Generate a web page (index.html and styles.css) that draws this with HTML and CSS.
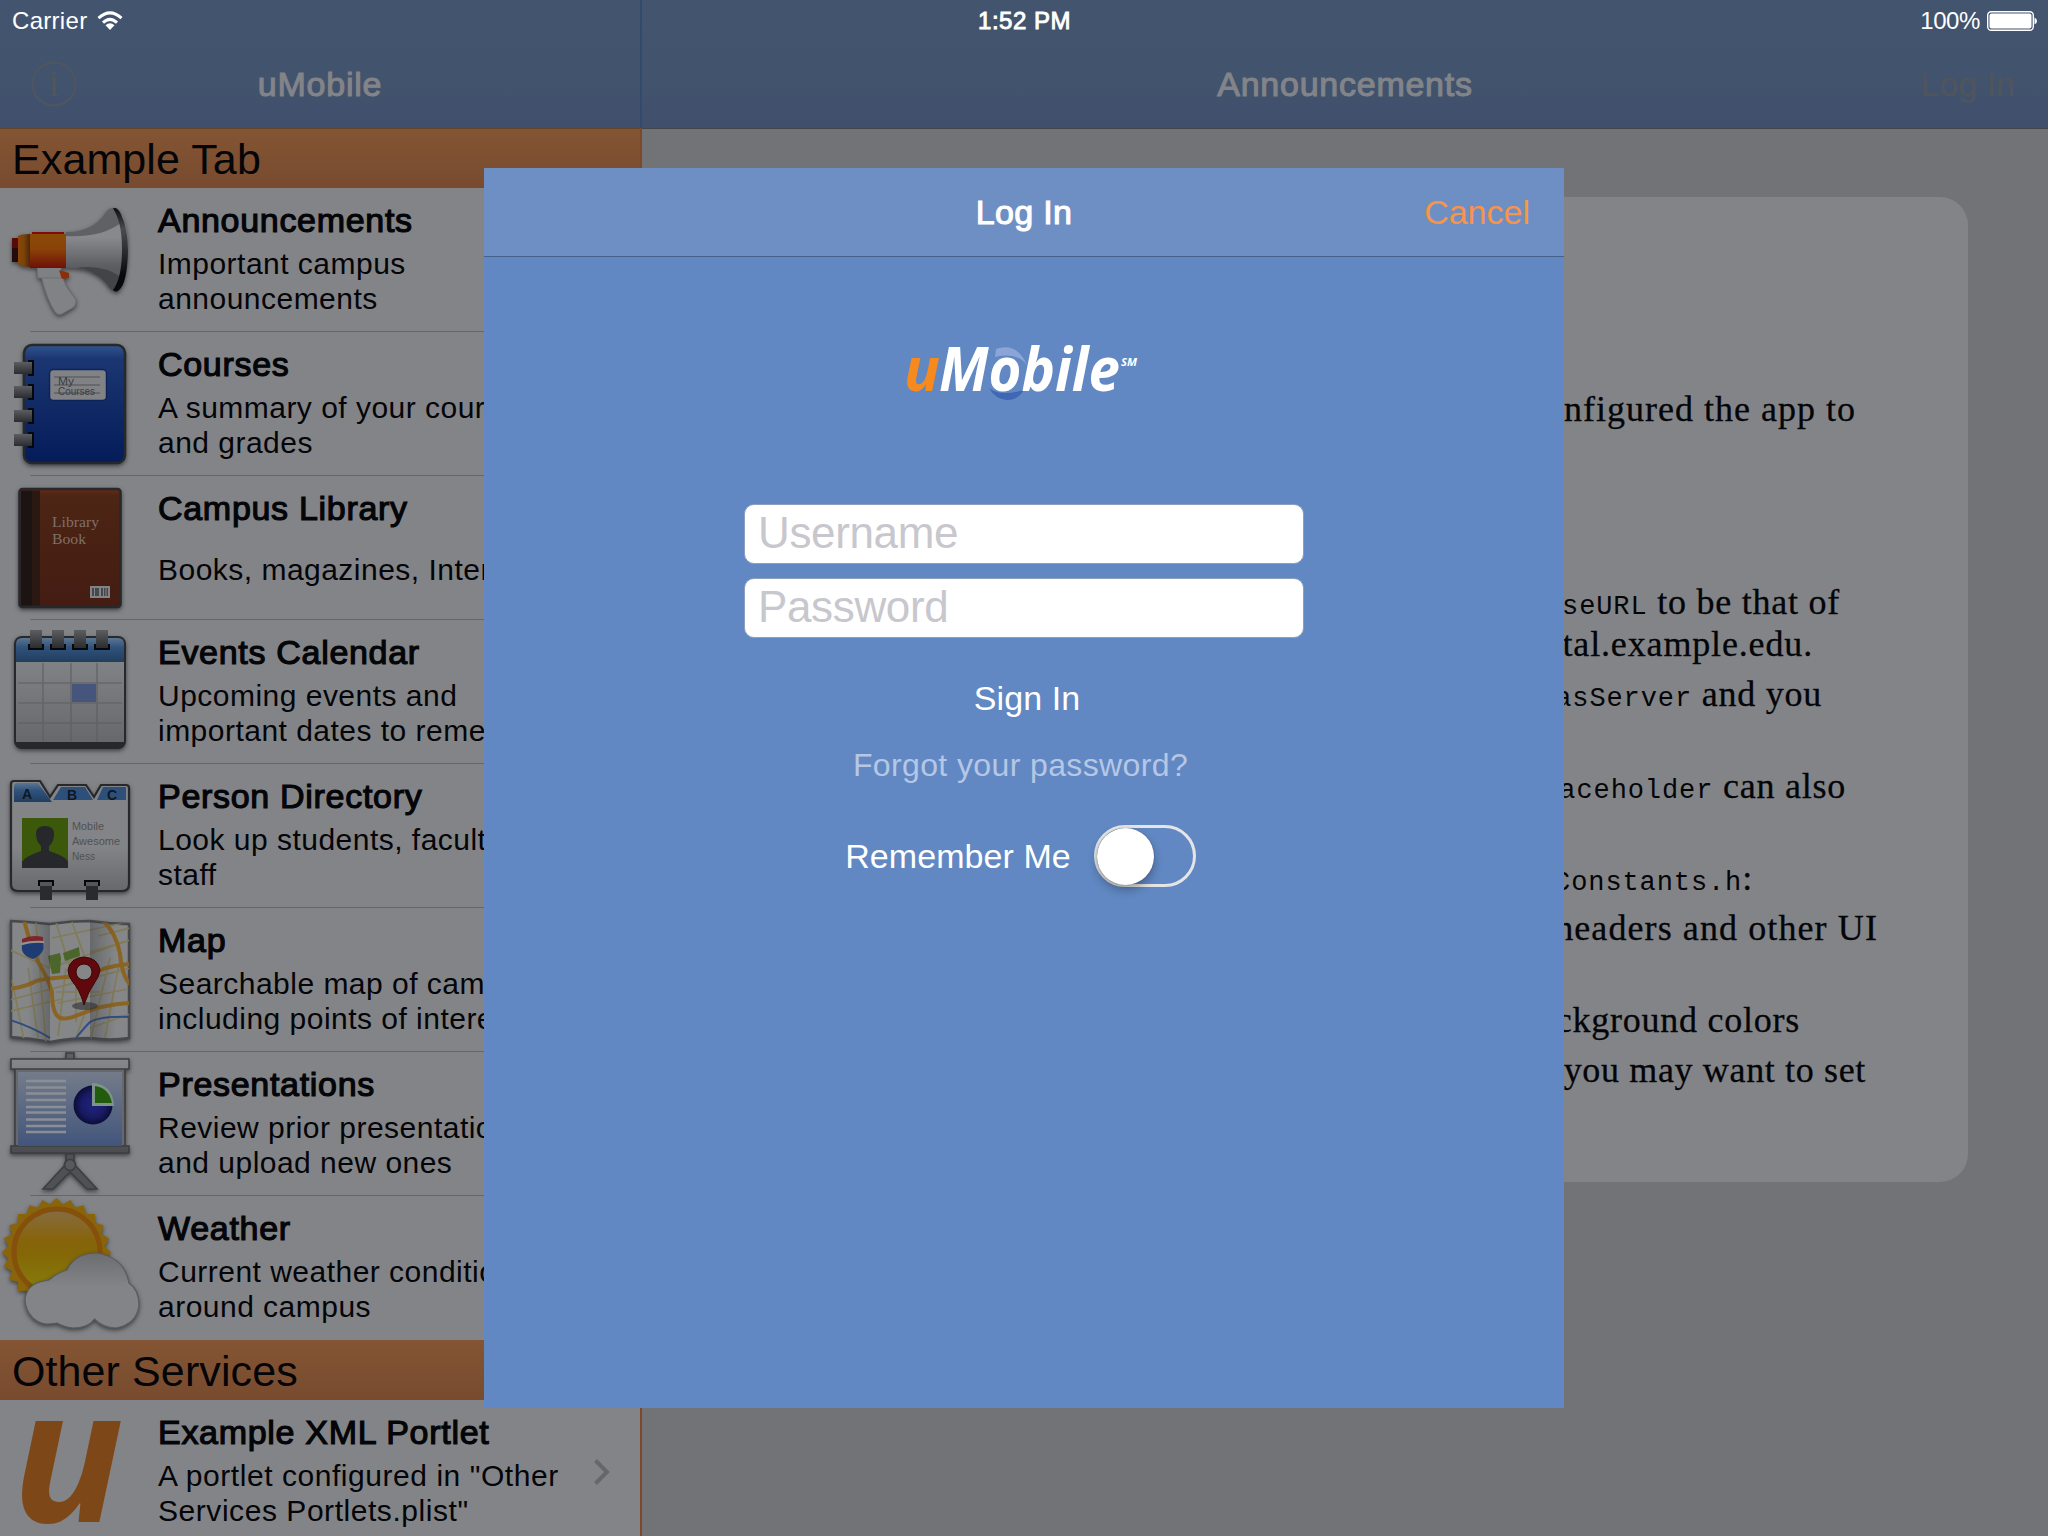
FILE: index.html
```html
<!DOCTYPE html>
<html lang="en">
<head>
<meta charset="utf-8">
<title>uMobile</title>
<link rel="stylesheet" href="styles.css">
</head>
<body>
<div class="screen">
  <aside class="sidebar">
    <header class="navbar navbar-left">
      <svg class="info" viewBox="0 0 46 46"><circle cx="23" cy="23" r="21.5"/><text x="23" y="35">i</text></svg>
      <h1 class="nav-title">uMobile</h1>
    </header>
    <div class="list">
    <h2 class="section">Example Tab</h2>
    <ul class="rows">
      <li class="row">
        <svg class="icon" viewBox="0 0 158 144">
          <defs>
            <linearGradient id="horn" x1="0" y1="0" x2="0" y2="1"><stop offset="0" stop-color="#88898c"/><stop offset=".35" stop-color="#88898c"/><stop offset=".7" stop-color="#5c5d60"/><stop offset="1" stop-color="#55565a"/></linearGradient>
            <linearGradient id="rim" x1="0" y1="0" x2="0" y2="1"><stop offset="0" stop-color="#0c0d10"/><stop offset=".25" stop-color="#4a4b4e"/><stop offset=".5" stop-color="#2d2e31"/><stop offset=".8" stop-color="#08090c"/><stop offset="1" stop-color="#08090c"/></linearGradient>
            <linearGradient id="grip" x1="0" y1="0" x2="0" y2="1"><stop offset="0" stop-color="#8b4a08"/><stop offset=".45" stop-color="#8a4207"/><stop offset="1" stop-color="#6f1008"/></linearGradient>
            <linearGradient id="cap" x1="0" y1="0" x2="1" y2="0"><stop offset="0" stop-color="#8a4709"/><stop offset=".5" stop-color="#7c4208"/><stop offset="1" stop-color="#4a270c"/></linearGradient>
          </defs>
          <g class="shadow">
            <path d="M41 88L62 88Q66 100 74 109Q78 113 74 119L62 126Q58 128 55 124Q47 112 41 88Z" fill="#818285" stroke="#6b6c6f"/>
            <path d="M66 44Q93 44 106 24Q110 19 116 20Q128 28 128 63Q127 96 117 104Q111 103 106 95Q93 79 66 80Z" fill="url(#horn)"/>
            <path d="M66 44Q93 44 106 24Q110 19 116 20Q120 24 122 34Q102 50 66 48Z" fill="#606164"/>
            <path d="M76 80Q104 76 122 90Q120 99 117 104Q111 103 106 95Q93 81 76 80Z" fill="#434447"/>
            <path d="M113 20.500Q117 18.500 121 26Q128 40 128 63Q127 96 119 102Q116 105 113 102Q122 90 122 61Q122 34 113 20.500Z" fill="url(#rim)"/>
            <path d="M37 78h24v12h-23z" fill="#7f8083" stroke="#6f7073"/>
            <path d="M59 82l10 3v5l-7 1z" fill="#8b2f0b"/>
            <path d="M12 50h6v24h-6z" fill="#570a0b"/><path d="M12 60h6v14h-6z" fill="#230b0d"/>
            <path d="M18 48q3-2 12-2v33q-9 0-12-3z" fill="url(#cap)"/>
            <path d="M30 46h36v34h-36z" fill="url(#grip)"/><path d="M32 44h32v2h-32z" fill="#7c0d0a"/>
          </g>
        </svg>
        <div class="text"><h3>Announcements</h3><p>Important campus<br>announcements</p></div>
      </li>
      <li class="row">
        <svg class="icon" viewBox="0 0 158 144">
          <defs>
            <linearGradient id="nb" x1="0" y1="0" x2="0" y2="1"><stop offset="0" stop-color="#31548f"/><stop offset=".12" stop-color="#1b3671"/><stop offset="1" stop-color="#041c59"/></linearGradient>
            <linearGradient id="coil" x1="0" y1="0" x2="0" y2="1"><stop offset="0" stop-color="#5c5d60"/><stop offset="1" stop-color="#2b2c2f"/></linearGradient>
          </defs>
          <g class="shadow"><rect x="24" y="13" width="101" height="118" rx="8" fill="url(#nb)" stroke="#26282c" stroke-width="2.5"/></g>
          <g fill="#05070b"><path d="M28 28h6v16h-6zM28 52h6v16h-6zM28 76h6v16h-6zM28 100h6v16h-6z"/></g>
          <g fill="url(#coil)"><rect x="14" y="30" width="18" height="12"/><rect x="14" y="54" width="18" height="12"/><rect x="14" y="78" width="18" height="12"/><rect x="14" y="102" width="18" height="12"/></g>
          <rect x="49.500" y="37.500" width="57" height="31" rx="4" fill="#818285" stroke="#0d2458" stroke-width="1.500"/>
          <path d="M54 45h46M54 53h46M54 61h46" stroke="#606164" stroke-width="1.500"/>
          <g class="tiny" fill="#3c3d41"><text x="58" y="53" textLength="16" lengthAdjust="spacingAndGlyphs">My</text><text x="58" y="63" textLength="37" lengthAdjust="spacingAndGlyphs">Courses</text></g>
        </svg>
        <div class="text"><h3>Courses</h3><p>A summary of your courses<br>and grades</p></div>
      </li>
      <li class="row">
        <svg class="icon" viewBox="0 0 158 144">
          <defs><linearGradient id="bk" x1="0" y1="0" x2="0" y2="1"><stop offset="0" stop-color="#632b15"/><stop offset=".06" stop-color="#4c2514"/><stop offset="1" stop-color="#441c12"/></linearGradient></defs>
          <g class="shadow"><rect x="19.500" y="13" width="101" height="118" rx="3" fill="url(#bk)" stroke="#26282c" stroke-width="2.500"/></g>
          <path d="M21 14.500h12v115h-12z" fill="#1c1413"/><path d="M32 14.500h8v115h-8z" fill="#2a1913"/>
          <g class="book" fill="#7f6f69"><text x="52" y="50.500" textLength="47" lengthAdjust="spacingAndGlyphs">Library</text><text x="52" y="67.500" textLength="34" lengthAdjust="spacingAndGlyphs">Book</text></g>
          <path d="M90 110h20v12h-20z" fill="#828386"/><path d="M92 112h2v8h-2zM95 112h4v8h-4zM101 112h2v8h-2zM104 112h1.500v8h-1.500zM106.500 112h1.500v8h-1.500z" fill="#46474a"/>
        </svg>
        <div class="text"><h3>Campus Library</h3><p>Books, magazines, Internet</p></div>
      </li>
      <li class="row">
        <svg class="icon" viewBox="0 0 158 144">
          <defs>
            <linearGradient id="cal" x1="0" y1="0" x2="0" y2="1"><stop offset="0" stop-color="#818285"/><stop offset="1" stop-color="#67686b"/></linearGradient>
            <linearGradient id="calh" x1="0" y1="0" x2="0" y2="1"><stop offset="0" stop-color="#5c7590"/><stop offset=".4" stop-color="#2f527c"/><stop offset="1" stop-color="#213e5d"/></linearGradient>
          </defs>
          <g class="shadow"><rect x="14" y="16" width="112" height="113" rx="8" fill="#26282c"/></g>
          <path d="M16 42V24q0-6 6-6h96q6 0 6 6v18z" fill="url(#calh)"/><path d="M16 42h108v80H16z" fill="url(#cal)"/>
          <path d="M43 43v79M71 43v79M97 43v79M18 63h104M18 83h104M18 103h104" stroke="#5d5e61" stroke-width="1.700" opacity=".65"/>
          <path d="M72 64h24v18h-24z" fill="#45557b"/>
          <path d="M28 24h16v6h-16zM50 24h16v6h-16zM72 24h16v6h-16zM94 24h16v6h-16z" fill="#05070b"/>
          <g fill="url(#coil)"><rect x="30" y="10" width="12" height="18"/><rect x="52" y="10" width="12" height="18"/><rect x="74" y="10" width="12" height="18"/><rect x="96" y="10" width="12" height="18"/></g>
        </svg>
        <div class="text"><h3>Events Calendar</h3><p>Upcoming events and<br>important dates to remember</p></div>
      </li>
      <li class="row">
        <svg class="icon" viewBox="0 0 158 144">
          <defs><linearGradient id="dir" x1="0" y1="0" x2="0" y2="1"><stop offset="0" stop-color="#838487"/><stop offset=".6" stop-color="#838487"/><stop offset="1" stop-color="#67686b"/></linearGradient></defs>
          <g class="shadow"><path d="M11 20q0-3 3-3h26l10 16 8-12h28l8 12 7-12h25q3 0 3 3v96q0 7-7 7H18q-7 0-7-7z" fill="url(#dir)" stroke="#26282c" stroke-width="2.200"/></g>
          <path d="M14 38V23q0-4 4-4h20l14 19z" fill="url(#calh)"/><path d="M53 36l8-13h24l8 13zM97 36l6-13h23v13z" fill="#2d507a"/>
          <g class="tabs" fill="#0f1722"><text x="27" y="34.500">A</text><text x="72" y="36">B</text><text x="112" y="36">C</text></g>
          <path d="M22 54h46v50H22z" fill="#3c580b"/><path d="M22 104v-6q2-5 19-11v-5q-5-5-5-12 0-8 9-8t9 8q0 8-5 12v5q18 6 19 11v6z" fill="#26282b"/>
          <g class="tiny" fill="#505154"><text x="72" y="66" textLength="32" lengthAdjust="spacingAndGlyphs">Mobile</text><text x="72" y="81" textLength="48" lengthAdjust="spacingAndGlyphs">Awesome</text><text x="72" y="95.500" textLength="23" lengthAdjust="spacingAndGlyphs">Ness</text></g>
          <path d="M38 122v-6h16v6zM84 122v-6h16v6z" fill="#05070b"/><path d="M40 118h12v18H40zM86 118h12v18H86z" fill="#2a2b2e"/><path d="M40 118h12v4H40zM86 118h12v4H86z" fill="#55565a"/>
        </svg>
        <div class="text"><h3>Person Directory</h3><p>Look up students, faculty and<br>staff</p></div>
      </li>
      <li class="row">
        <svg class="icon" viewBox="0 0 158 144">
          <defs>
            <clipPath id="mapclip"><path d="M11 13Q30 14 50 16Q70 13 90 13Q110 16 129 16V130Q110 133 90 130Q70 130 50 134Q30 130 11 129Z"/></clipPath>
            <linearGradient id="fold" x1="0" y1="0" x2="1" y2="0"><stop offset="0" stop-color="#26282c" stop-opacity="0"/><stop offset="1" stop-color="#26282c" stop-opacity=".32"/></linearGradient>
            <linearGradient id="fold2" x1="0" y1="0" x2="1" y2="0"><stop offset="0" stop-color="#26282c" stop-opacity=".32"/><stop offset="1" stop-color="#26282c" stop-opacity="0"/></linearGradient>
          </defs>
          <g class="shadow"><path d="M11 13Q30 14 50 16Q70 13 90 13Q110 16 129 16V130Q110 133 90 130Q70 130 50 134Q30 130 11 129Z" fill="#858688" stroke="#47484b" stroke-width="2.500"/></g>
          <g clip-path="url(#mapclip)" fill="none">
            <path d="M10 42l40 18 80-28M10 92l120-32M10 103l52-12M36 14l10 122M52 30l76-16M56 14l14 46M72 14l16 44M98 28l32-8M90 44l40-12M56 84h44M58 95l70-14M66 60l-8 68M76 64v50M88 96l-12 34M110 50l-20 84M119 56l-14 74M12 72l12 60M28 60l10 70M90 120l40-14" stroke="#827b58" stroke-width="1.700"/>
            <path d="M10 81Q28 78 36 73Q44 70 86 68L106 60Q118 57 130 56M24 12Q30 36 38 54Q48 70 52 84Q52 106 60 110Q66 112 78 107Q104 96 130 95M102 12Q116 24 120 46Q122 68 130 76" stroke="#8a6422" stroke-width="4"/>
            <path d="M10 112Q32 119 50 130M76 130Q84 120 90 114Q100 108 130 109" stroke="#304c85" stroke-width="2"/>
            <path d="M48 48l12-3 1 5-1 15-8 1zM63 45l16-6 1 9-15 5z" fill="#4b652b"/>
            <path d="M28 10h22v126h-22z" fill="url(#fold)"/><path d="M90 10h26v126h-26z" fill="url(#fold2)"/>
          </g>
          <path d="M22 31q10-5 21-2v5l-21 2z" fill="#7c2629"/><path d="M22 37q11-3 21-2 3 10-10 16-13-4-11-14z" fill="#1f3b73"/><path d="M21 36q11-3 23-2" stroke="#929396" stroke-width="2" fill="none"/>
          <ellipse cx="85" cy="98" rx="13" ry="4" fill="#303134" opacity=".6"/>
          <path d="M84 97Q80 82 72 73Q68 67 68 62Q70 50 84 49Q98 50 100 62Q99 69 95 74Q88 84 84 97Z" fill="#60080c" stroke="#350b0e"/><circle cx="84" cy="64" r="8" fill="#858688" stroke="#3b0609"/>
        </svg>
        <div class="text"><h3>Map</h3><p>Searchable map of campus,<br>including points of interest</p></div>
      </li>
      <li class="row">
        <svg class="icon" viewBox="0 0 158 144">
          <defs>
            <linearGradient id="scr" x1="0" y1="0" x2="0" y2="1"><stop offset="0" stop-color="#747c8b"/><stop offset="1" stop-color="#42557b"/></linearGradient>
            <linearGradient id="bar" x1="0" y1="0" x2="0" y2="1"><stop offset="0" stop-color="#87888b"/><stop offset="1" stop-color="#4b4c4f"/></linearGradient>
            <radialGradient id="pie"><stop offset="0" stop-color="#20227c"/><stop offset=".6" stop-color="#191b66"/><stop offset="1" stop-color="#0b0d36"/></radialGradient>
          </defs>
          <g class="shadow" stroke="#3d3e41" stroke-width="1.600">
            <path d="M66 7V1h8v6" fill="#5d5e61"/>
            <path d="M66 112L43 137h10L70 120 87 137h10L74 112V102h-8z" fill="#505154"/><circle cx="70" cy="113" r="5.500" fill="#58595c"/>
            <path d="M15 16h110v78H15z" fill="#67686b"/><path d="M11 7h118v10H11zM11 94h118v7H11z" fill="url(#bar)"/>
          </g>
          <path d="M18 20h104v74H18z" fill="url(#scr)"/>
          <path d="M26 29h40M26 35.500h40M26 41.500h40M26 48h40M26 55h40M26 60.500h40M26 67.500h40M26 74h40M26 80h40" stroke="#8b8e95" stroke-width="2.500"/>
          <circle cx="93" cy="53" r="19.500" fill="url(#pie)"/>
          <path d="M92 54V31q21 1 22 23z" fill="#7e9489"/><path d="M95 51V34q14 2 17 17z" fill="#225b0d"/>
        </svg>
        <div class="text"><h3>Presentations</h3><p>Review prior presentations<br>and upload new ones</p></div>
      </li>
      <li class="row last">
        <svg class="icon" viewBox="0 0 158 144">
          <defs>
            <linearGradient id="sun" x1="0" y1="0" x2="0" y2="1"><stop offset="0" stop-color="#866c45"/><stop offset=".35" stop-color="#87640c"/><stop offset=".5" stop-color="#846607"/><stop offset="1" stop-color="#86800c"/></linearGradient>
            <linearGradient id="cld" x1="0" y1="0" x2="0" y2="1"><stop offset="0" stop-color="#6c6d70"/><stop offset=".45" stop-color="#838487"/><stop offset="1" stop-color="#838487"/></linearGradient>
            <rect id="ray" x="-38.500" y="-38.500" width="77" height="77"/>
          </defs>
          <g class="shadow"><g transform="translate(56.500 56.500)" fill="#8a640a">
            <use href="#ray"/><use href="#ray" transform="rotate(15)"/><use href="#ray" transform="rotate(30)"/><use href="#ray" transform="rotate(45)"/><use href="#ray" transform="rotate(60)"/><use href="#ray" transform="rotate(75)"/>
          </g></g>
          <circle cx="57" cy="56" r="43" fill="url(#sun)" stroke="#84500b" stroke-width="5"/>
          <g class="shadow"><path d="M57 127Q51 128 47 128Q40 128 33 122Q25 114 25 103Q27 88 44 85Q49 85 54 80Q60 76 67 74Q75 57 97 57Q125 62 129 87Q139 94 139 109Q137 128 116 132Q103 132 94.500 123Q88 132 73 132Q64 131 57 127Z" fill="url(#cld)" stroke="#5b5c5f" stroke-width="1.200"/></g>
        </svg>
        <div class="text"><h3>Weather</h3><p>Current weather conditions<br>around campus</p></div>
      </li>
    </ul>
    <h2 class="section">Other Services</h2>
    <ul class="rows">
      <li class="row last">
        <svg class="icon" viewBox="0 0 158 144"><text class="brand-u" x="12" y="122" textLength="112" lengthAdjust="spacingAndGlyphs">u</text></svg>
        <div class="text"><h3>Example XML Portlet</h3><p class="wide">A portlet configured in "Other<br>Services Portlets.plist"</p></div>
        <svg class="chevron" viewBox="0 0 18 28"><path d="M2.500 2.500L14 14 2.500 25.500"/></svg>
      </li>
    </ul>
    </div>
  </aside>
  <main class="detail">
    <header class="navbar navbar-right">
      <h1 class="nav-title">Announcements</h1>
      <span class="login-link">Log In</span>
    </header>
    <article class="card">
      <p class="l1">configured the app to</p>
      <p class="l2"><code>baseURL</code> to be that of</p>
      <p class="l3">portal.example.edu.</p>
      <p class="l4"><code>casServer</code> and you</p>
      <p class="l5"><code>placeholder</code> can also</p>
      <p class="l6"><code>Constants.h</code>:</p>
      <p class="l7">headers and other UI</p>
      <p class="l8">background colors</p>
      <p class="l9">you may want to set</p>
    </article>
  </main>

  <div class="statusbar">
    <span class="carrier">Carrier
      <svg class="wifi" viewBox="0 0 26 20"><path d="M1.500 7.200Q13-3.600 24.500 7.200M6 11.700Q13 5 20 11.700" /><path class="dot" d="M8.500 14.200Q13 10.200 17.500 14.200L13 19z"/></svg>
    </span>
    <span class="time">1:52 PM</span>
    <span class="power">100%
      <svg class="battery" viewBox="0 0 50 20"><rect class="shell" x=".7" y=".7" width="45.600" height="18.600" rx="3.500"/><rect x="2.500" y="2.500" width="42" height="15" rx="2"/><path d="M47.500 6.500q2.500 1 2.500 3.500t-2.500 3.500z"/></svg>
    </span>
  </div>

  <section class="modal">
    <header class="modal-bar"><h2>Log In</h2><span class="cancel">Cancel</span></header>
    <form class="form">
      <svg class="logo" viewBox="0 0 236 64">
        <path d="M96 9Q117 2 127 25Q117 12 95 17Z" fill="#8ba6d6"/><path d="M89 48Q99 57 124 50Q118 60 107 60Q95 59 89 48Z" fill="#3f67b3"/>
        <g class="wordmark"><text class="u" x="4" y="51" textLength="36" lengthAdjust="spacingAndGlyphs">u</text><text x="39" y="51" textLength="181" lengthAdjust="spacingAndGlyphs">Mobile</text></g>
        <text class="sm" x="221" y="26" textLength="16" lengthAdjust="spacingAndGlyphs">SM</text>
      </svg>
      <div class="fields"><div class="field">Username</div><div class="field">Password</div></div>
      <div class="signin">Sign In</div>
      <div class="forgot">Forgot your password?</div>
      <div class="remember"><span>Remember Me</span><span class="switch"><i></i></span></div>
    </form>
  </section>
</div>
</body>
</html>
```
FILE: styles.css
```css
* { box-sizing: border-box; margin: 0; padding: 0; }
body { width: 2048px; height: 1536px; overflow: hidden; background: #727376; font-family: "Liberation Sans", Arial, sans-serif; }
h1, h2, h3 { font-weight: 400; }
ul { list-style: none; }
.screen { position: relative; display: grid; grid-template-columns: 642px 1406px; width: 2048px; height: 1536px; overflow: hidden; }

.sidebar { height: 1536px; background: #838487; overflow: hidden; }
.list { border-right: 2px solid #7c4a29; height: 1408px; }
.navbar { display: grid; align-items: center; height: 128px; padding-top: 40px; background: linear-gradient(#43546f, #42536e 65%, #404f6c); }
.navbar-left { width: 642px; grid-template-columns: 1fr auto 1fr; padding-left: 31px; padding-right: 31px; border-right: 2px solid #344a6d; }
.navbar-right { grid-template-columns: 1fr auto 1fr; padding: 40px 33px 0; border-bottom: 1px solid #42464d; height: 129px; }
.nav-title { font-size: 34px; line-height: 40px; letter-spacing: .75px; color: #828488; -webkit-text-stroke: 1.1px #828488; }
.navbar-left .nav-title { grid-column: 2; }
.navbar-right .nav-title { grid-column: 2; }
.login-link { justify-self: end; font-size: 34px; line-height: 40px; color: #50555c; }
.info { width: 46px; height: 46px; }
.info circle { fill: none; stroke: #51565d; stroke-width: 1.8; }
.info text { font: 37px "Liberation Serif", serif; fill: #51565d; text-anchor: middle; }

.section { height: 60px; padding: 6px 0 0 12px; border-top: 1px solid #64432d; background: linear-gradient(#835533, #784b2f); font-size: 43px; line-height: 48px; letter-spacing: .1px; color: #040508; }
.rows + .section { border-top-color: #835533; }
.row { display: flex; height: 144px; background: linear-gradient(#65666a, #65666a) 30px 100% / 100% 1px no-repeat; }
.row.last { background: none; }
.icon { flex: none; width: 158px; height: 144px; overflow: visible; }
.shadow { filter: drop-shadow(0 2px 2px rgba(20, 21, 24, .6)); }
.text { flex: none; width: 430px; padding-top: 12px; color: #040508; white-space: nowrap; }
.text h3 { font-size: 34px; line-height: 40px; letter-spacing: .7px; -webkit-text-stroke: 1.2px #040508; }
.text p { display: grid; align-content: center; height: 70px; margin-top: 6px; font-size: 30px; line-height: 35px; letter-spacing: .48px; }
.text .wide { letter-spacing: .55px; }
.tiny { font: 11px "Liberation Sans", sans-serif; }
.book { font: 15px "Liberation Serif", serif; }
.tabs { font: bold 14px "Liberation Sans", sans-serif; text-anchor: middle; }
.brand-u { font: italic 700 185px "Open Sans", sans-serif; fill: #7e4717; }
.chevron { width: 18px; height: 28px; margin: 58px 0 0 5px; }
.chevron path { fill: none; stroke: #65676b; stroke-width: 4; }

.detail { background: #727376; }
.card { width: 1246px; height: 985px; margin: 68px 80px 0; padding-top: 191px; border-radius: 28px; background: #838487; color: #040508; font-family: "Liberation Serif", serif; font-size: 36px; line-height: 42px; letter-spacing: .75px; text-align: right; display: flex; flex-direction: column; white-space: nowrap; -webkit-text-stroke: .3px #040508; }
.card code { font-family: "Liberation Mono", monospace; font-size: 27px; letter-spacing: .9px; -webkit-text-stroke: 0; }
.card p { height: 42px; }
.l1 { margin: 0 112px 0 0; letter-spacing: 1px; }
.l2 { margin: 151px 128px 0 0; }
.l3 { margin: 0 155px 0 0; letter-spacing: .85px; }
.l4 { margin: 8px 146px 0 0; }
.l5 { margin: 50px 122px 0 0; }
.l6 { margin: 50px 215px 0 0; }
.l7 { margin: 8px 90px 0 0; letter-spacing: 1.1px; }
.l8 { margin: 50px 168px 0 0; }
.l9 { margin: 8px 102px 0 0; letter-spacing: .65px; }

.statusbar { position: absolute; inset: 0 0 auto 0; display: grid; grid-template-columns: 1fr auto 1fr; height: 42px; padding: 0 11px 0 12px; align-items: center; color: #fff; font-size: 24px; line-height: 28px; letter-spacing: .3px; }
.statusbar span { display: flex; align-items: center; gap: 10px; }
.statusbar .power { justify-self: end; gap: 7px; letter-spacing: -.4px; }
.time { letter-spacing: .5px; -webkit-text-stroke: .9px #fff; }
.wifi { width: 26px; height: 20px; }
.wifi path { fill: none; stroke: #fff; stroke-width: 3; }
.wifi .dot { fill: #fff; stroke: none; }
.battery { width: 50px; height: 20px; fill: #fff; }
.battery .shell { fill: none; stroke: #fff; stroke-width: 1.4; }

.modal { position: absolute; left: 484px; top: 168px; width: 1080px; height: 1240px; background: #6188c3; color: #fff; }
.modal-bar { display: grid; grid-template-columns: 1fr auto 1fr; align-items: center; height: 89px; padding: 0 34px; background: #6e8fc4; border-bottom: 1px solid #44608b; font-size: 34px; line-height: 40px; }
.modal-bar h2 { grid-column: 2; font-size: 34px; letter-spacing: .3px; -webkit-text-stroke: 1.1px #fff; }
.cancel { justify-self: end; color: #f8944a; }
.form { display: flex; flex-direction: column; align-items: center; }
.logo { width: 236px; height: 64px; margin: 83px 12px 0 0; overflow: visible; }
.wordmark { font: italic 700 61px "Open Sans", sans-serif; fill: #fff; }
.wordmark .u { fill: #f68a1f; }
.sm { font: italic 700 11px "Open Sans", sans-serif; fill: #fff; }
.fields { display: grid; gap: 14px; margin-top: 100px; }
.field { width: 560px; height: 60px; padding: 3px 0 0 13px; border: 1px solid #8c9fbf; border-radius: 10px; background: #fff; color: #c7c7cd; font-size: 44px; line-height: 50px; letter-spacing: -.35px; }
.signin { margin: 40px 0 0 6px; font-size: 34px; line-height: 40px; letter-spacing: .1px; }
.forgot { margin: 29px 0 0 -7px; font-size: 32px; line-height: 36px; letter-spacing: .38px; color: #b5c7e4; }
.remember { display: flex; align-items: center; gap: 23px; margin: 42px 0 0 -7px; font-size: 34px; line-height: 40px; letter-spacing: .08px; }
.switch { width: 102px; height: 62px; border: 3px solid #e5e5e5; border-radius: 31px; }
.switch i { display: block; width: 57px; height: 57px; border-radius: 50%; background: #fff; box-shadow: 0 5px 10px rgba(0, 0, 0, .3), 0 0 1px rgba(0, 0, 0, .5); }
```
